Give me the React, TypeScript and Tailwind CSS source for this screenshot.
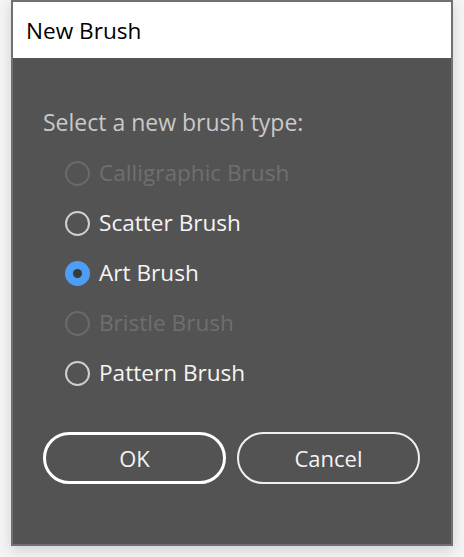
import React from "react";

const options = [
  { label: "Calligraphic Brush", disabled: true, checked: false },
  { label: "Scatter Brush", disabled: false, checked: false },
  { label: "Art Brush", disabled: false, checked: true },
  { label: "Bristle Brush", disabled: true, checked: false },
  { label: "Pattern Brush", disabled: false, checked: false },
];

function Radio({ disabled, checked }: { disabled: boolean; checked: boolean }) {
  if (checked) {
    return (
      <div className="w-[25px] h-[25px] rounded-full bg-[#4d9ef6] flex items-center justify-center shrink-0">
        <div className="w-[9px] h-[9px] rounded-full bg-[#3a3a3a]" />
      </div>
    );
  }
  return (
    <div
      className={
        disabled
          ? "w-[25px] h-[25px] rounded-full border-2 border-[#6a6a6a] shrink-0"
          : "w-[25px] h-[25px] rounded-full border-2 border-[#d0d0d0] shrink-0"
      }
    />
  );
}

export default function App() {
  return (
    <div
      className="w-[464px] h-[557px] bg-[#f4f4f4] pl-[11px]"
      style={{ fontFamily: '"Open Sans", "Noto Sans", sans-serif' }}
    >
      <div className="w-[442px] h-[546px] border-2 border-[#707070] flex flex-col shadow-[0_4px_12px_rgba(0,0,0,0.15)]">
        <div className="h-[56px] bg-white flex items-center pl-[13px] pt-[2px] text-[22.6px] text-black">
          New Brush
        </div>
        <div className="flex-1 bg-[#535353] pl-[30px] pt-[49px] flex flex-col">
          <div className="h-[30px] flex items-center text-[23px] text-[#c9c9c9]">
            Select a new brush type:
          </div>
          <div className="flex flex-col mt-[11px] pl-[22px]">
            {options.map((o) => (
              <div key={o.label} className="h-[50px] flex items-center gap-[9px]">
                <Radio disabled={o.disabled} checked={o.checked} />
                <span
                  className={
                    o.disabled
                      ? "text-[22.6px] text-[#6f6f6f]"
                      : "text-[22.6px] text-[#f4f4f4]"
                  }
                >
                  {o.label}
                </span>
              </div>
            ))}
          </div>
          <div className="flex gap-[11px] mt-[34px]">
            <button className="w-[183px] h-[52px] rounded-full border-[3px] border-white text-[22px] text-[#f4f4f4] flex items-center justify-center">
              OK
            </button>
            <button className="w-[183px] h-[52px] rounded-full border-2 border-[#f0f0f0] text-[22px] text-[#f4f4f4] flex items-center justify-center">
              Cancel
            </button>
          </div>
        </div>
      </div>
    </div>
  );
}
